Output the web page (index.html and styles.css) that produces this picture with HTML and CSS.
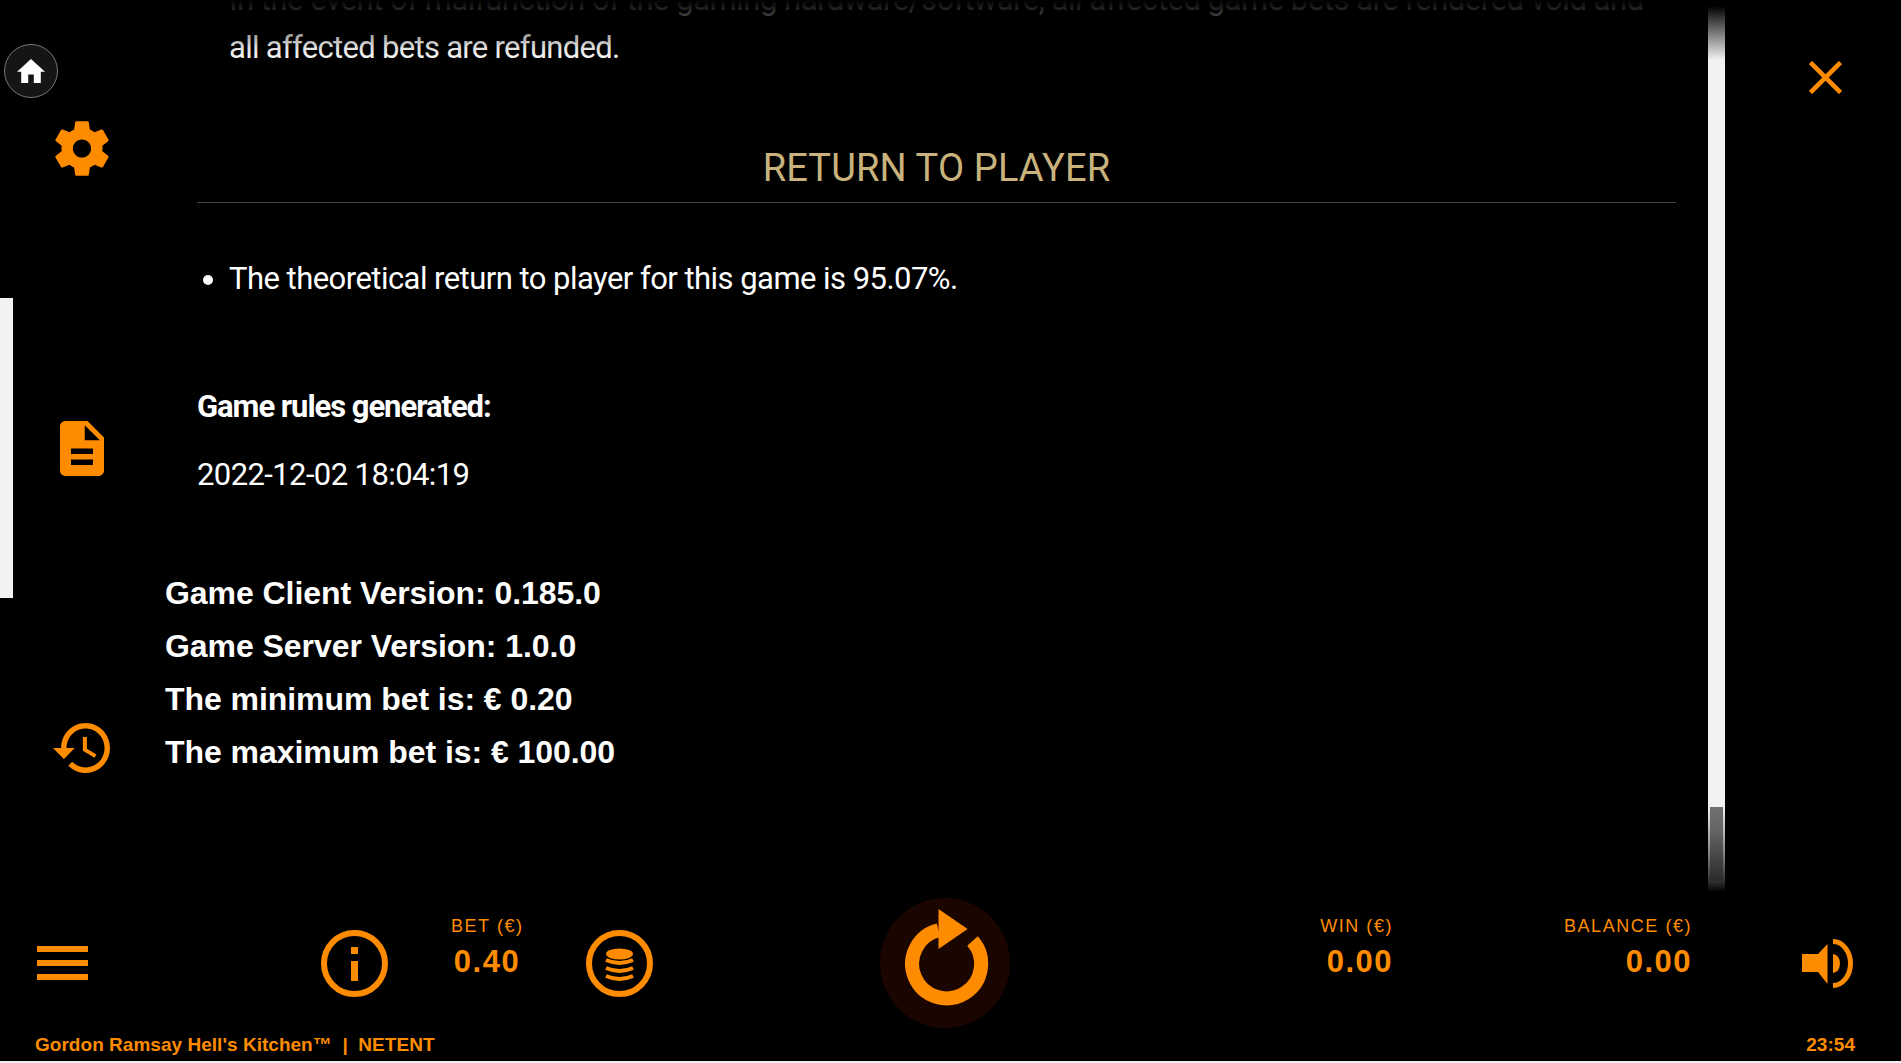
FILE: index.html
```html
<!DOCTYPE html>
<html lang="en">
<head>
  <meta charset="UTF-8" />
  <meta name="viewport" content="width=device-width, initial-scale=1.0"/>
  <title>Gordon Ramsay Hell's Kitchen - Game Rules</title>
  <link rel="stylesheet" href="styles.css">
</head>
<body>

  <div class="main">

    <!-- Left rail -->
    <nav class="rail">
      <div class="rail-mark"></div>
      <button class="home">
        <svg viewBox="2 3 20 17" width="28" height="24"><path fill="#fff" d="M10 20v-6h4v6h5v-8h3L12 3 2 12h3v8z"/></svg>
      </button>
      <svg class="rail-gear" viewBox="2.6 2 18.8 20" width="54" height="57"><path fill="#ff8c00" d="M19.14 12.94c.04-.3.06-.61.06-.94 0-.32-.02-.64-.07-.94l2.03-1.58c.18-.14.23-.41.12-.61l-1.92-3.32c-.12-.22-.37-.29-.59-.22l-2.39.96c-.5-.38-1.03-.7-1.62-.94l-.36-2.54c-.04-.24-.24-.41-.48-.41h-3.84c-.24 0-.43.17-.47.41l-.36 2.54c-.59.24-1.13.57-1.62.94l-2.39-.96c-.22-.08-.47 0-.59.22L2.74 8.87c-.12.21-.08.47.12.61l2.03 1.58c-.05.3-.09.63-.09.94s.02.64.07.94l-2.03 1.58c-.18.14-.23.41-.12.61l1.92 3.32c.12.22.37.29.59.22l2.39-.96c.5.38 1.03.7 1.62.94l.36 2.54c.05.24.24.41.48.41h3.84c.24 0 .44-.17.47-.41l.36-2.54c.59-.24 1.13-.56 1.62-.94l2.39.96c.22.08.47 0 .59-.22l1.92-3.32c.12-.22.07-.47-.12-.61l-2.01-1.58zM12 15.2c-1.76 0-3.2-1.44-3.2-3.2s1.44-3.2 3.2-3.2 3.2 1.44 3.2 3.2-1.44 3.2-3.2 3.2z"/></svg>
      <svg class="rail-doc" viewBox="4 2 16 20" width="44" height="55"><path fill="#ff8c00" d="M14 2H6c-1.1 0-2 .9-2 2v16c0 1.1.9 2 2 2h12c1.1 0 2-.9 2-2V8l-6-6zm2 16H8v-2h8v2zm0-4H8v-2h8v2zm-3-5V3.5L18.5 9H13z"/></svg>
      <svg class="rail-history" viewBox="1 3 21 18" width="57" height="50" preserveAspectRatio="none"><path fill="#ff8c00" d="M13 3c-4.97 0-9 4.03-9 9H1l3.89 3.89.07.14L9 12H6c0-3.87 3.13-7 7-7s7 3.13 7 7-3.13 7-7 7c-1.93 0-3.68-.79-4.94-2.06l-1.42 1.42C8.27 19.99 10.51 21 13 21c4.97 0 9-4.03 9-9s-4.03-9-9-9zm-1 5v5l4.28 2.54.72-1.21-3.5-2.08V8H12z"/></svg>
    </nav>

    <!-- Rules text -->
    <section class="content">
      <div class="fade"></div>
      <div class="rules">
        <p class="rules-text">In the event of malfunction of the gaming hardware/software, all affected game bets are rendered void and</p>
        <p class="rules-text rules-text-end">all affected bets are refunded.</p>
        <h2 class="rules-title">RETURN TO PLAYER</h2>
        <ul class="rules-list">
          <li>The theoretical return to player for this game is 95.07%.</li>
        </ul>
        <p class="generated">Game rules generated:</p>
        <p class="generated-date">2022-12-02 18:04:19</p>
      </div>
      <div class="versions">
        <div>Game Client Version: 0.185.0</div>
        <div>Game Server Version: 1.0.0</div>
        <div>The minimum bet is: € 0.20</div>
        <div>The maximum bet is: € 100.00</div>
      </div>
    </section>

    <div class="track">
      <div class="thumb"></div>
    </div>

    <div class="side">
      <svg viewBox="0 0 33 33" width="33" height="33"><path stroke="#ff8c00" stroke-width="4.5" d="M1.500 1.500l30 30M31.500 1.500l-30 30"/></svg>
    </div>
  </div>

  <!-- Bottom controls -->
  <div class="controls">
    <div class="menu"><span></span><span></span><span></span></div>

    <svg class="ctl-info" viewBox="0 0 67 67" width="67" height="67">
      <circle cx="33.5" cy="33.5" r="30.5" fill="none" stroke="#ff8c00" stroke-width="6"/>
      <rect x="30" y="17" width="7" height="7" fill="#ff8c00"/>
      <rect x="30" y="31" width="7" height="20" fill="#ff8c00"/>
    </svg>

    <div class="stat stat-bet">
      <div class="stat-label">BET (€)</div>
      <div class="stat-value">0.40</div>
    </div>

    <svg class="ctl-coins" viewBox="0 0 67 67" width="67" height="67">
      <circle cx="33.5" cy="33.5" r="30.5" fill="none" stroke="#ff8c00" stroke-width="6"/>
      <ellipse cx="33.5" cy="24" rx="13.5" ry="5.5" fill="#ff8c00"/>
      <path fill="none" stroke="#ff8c00" stroke-width="4" d="M20 30q13.5 6 27 0M20 38q13.5 6 27 0M20 46q13.5 6 27 0"/>
    </svg>

    <button class="spin">
      <svg viewBox="0 0 130 130" width="130" height="130">
        <path fill="none" stroke="#ff8c00" stroke-width="14" d="M92.5 43A34.5 34.5 0 1 1 58.5 32.3"/>
        <path fill="#ff8c00" d="M58.5 11L87.6 31 58.5 51z"/>
      </svg>
    </button>

    <div class="stat stat-win">
      <div class="stat-label">WIN (€)</div>
      <div class="stat-value">0.00</div>
    </div>

    <div class="stat stat-balance">
      <div class="stat-label">BALANCE (€)</div>
      <div class="stat-value">0.00</div>
    </div>

    <svg class="ctl-sound" viewBox="0 0 51 49" width="51" height="49">
      <path fill="#ff8c00" d="M0 15h16L25.5 5v40L16 33H0z"/>
      <path fill="#ff8c00" d="M31 15a7 9.500 0 0 1 0 19z"/>
      <path fill="none" stroke="#ff8c00" stroke-width="5" d="M31 2.500A17.500 22 0 0 1 31 46.500"/>
    </svg>
  </div>

  <footer class="footer">
    <span>Gordon Ramsay Hell's Kitchen™&nbsp; | &nbsp;NETENT</span>
    <span>23:54</span>
  </footer>

</body>
</html>
```

FILE: styles.css
```css
body {
  margin: 0;
  height: 1063px;
  overflow: hidden;
  background: #000;
  color: #fff;
  font-family: Roboto, sans-serif;
  display: flex;
  flex-direction: column;
}
p, h2, ul {
  margin: 0;
  padding: 0;
}
button {
  padding: 0;
  border: none;
  background: none;
}
svg {
  display: block;
  flex: none;
}

.main {
  display: flex;
  height: 898px;
}

/* left rail */
.rail {
  position: relative;
  width: 165px;
  flex: none;
  display: flex;
  flex-direction: column;
  align-items: center;
  padding-right: 1px;
  box-sizing: border-box;
}
.rail-mark {
  position: absolute;
  left: 0;
  top: 298px;
  width: 13px;
  height: 300px;
  background: #f2f2f2;
}
.home {
  align-self: flex-start;
  margin: 44px 0 0 4px;
  width: 54px;
  height: 54px;
  box-sizing: border-box;
  border: 1px solid #777;
  border-radius: 50%;
  background: #151515;
  display: flex;
  align-items: center;
  justify-content: center;
}
.rail-gear {
  margin-top: 22px;
}
.rail-doc {
  margin-top: 244px;
}
.rail-history {
  margin: 247px 2px 0 0;
}

/* rules text */
.content {
  position: relative;
  width: 1543px;
  flex: none;
  overflow: hidden;
}
.fade {
  position: absolute;
  left: 0;
  right: 0;
  top: 0;
  height: 62px;
  background: linear-gradient(to bottom, #000 0, rgba(0, 0, 0, 0.78) 14px, rgba(0, 0, 0, 0.12) 48px, rgba(0, 0, 0, 0) 100%);
}
.rules {
  width: 1479px;
  margin-left: 32px;
  margin-top: -24px;
  font-size: 31px;
  line-height: 48px;
}
.rules-text {
  padding-left: 32px;
  letter-spacing: -0.47px;
}
.rules-text-end {
  letter-spacing: -0.7px;
}
.rules-title {
  margin-top: 72px;
  padding-bottom: 10px;
  border-bottom: 1px solid #444;
  font-size: 38px;
  font-weight: 400;
  line-height: 48px;
  letter-spacing: 0.15px;
  text-align: center;
  color: #c9b27c;
}
.rules-list {
  margin-top: 52px;
  padding-left: 32px;
  letter-spacing: -0.54px;
}
.generated {
  margin-top: 80px;
  font-weight: 700;
  letter-spacing: -1.05px;
}
.generated-date {
  margin-top: 20px;
  letter-spacing: -0.6px;
}
.versions {
  margin-top: 67px;
  padding-top: 1px;
  font-family: "Liberation Sans", sans-serif;
  font-size: 32px;
  font-weight: 700;
  line-height: 53.1px;
  letter-spacing: -0.06px;
}

/* scrollbar */
.track {
  position: relative;
  width: 17px;
  height: 886px;
  margin-top: 6px;
  flex: none;
  background: linear-gradient(to bottom, #000 0, #f2f2f2 54px, #f2f2f2 801px, #888 846px, #333 875px, #000 886px);
}
.thumb {
  position: absolute;
  left: 2px;
  top: 801px;
  width: 13px;
  height: 74px;
  background: linear-gradient(to bottom, #707070 0, #666 30%, #2a2a2a 100%);
}
.side {
  padding: 61px 0 0 84px;
}

/* bottom controls */
.controls {
  display: flex;
  align-items: center;
  height: 130px;
  flex: none;
  color: #ff8c00;
  font-family: "Liberation Sans", sans-serif;
}
.menu {
  display: flex;
  flex-direction: column;
  gap: 8px;
  width: 51px;
  margin-left: 37px;
}
.menu span {
  height: 6px;
  background: #ff8c00;
}
.ctl-info {
  margin-left: 233px;
}
.stat {
  align-self: flex-start;
  padding-top: 18px;
  text-align: right;
}
.stat-label {
  font-size: 18px;
  line-height: 20px;
  letter-spacing: 1.55px;
  white-space: nowrap;
}
.stat-value {
  margin-top: 8px;
  font-size: 31px;
  font-weight: 700;
  line-height: 36px;
  letter-spacing: 1.5px;
}
.stat-bet {
  width: 72px;
  margin-left: 63px;
  text-align: center;
}
.ctl-coins {
  margin-left: 63px;
}
.spin {
  width: 130px;
  height: 130px;
  margin-left: 227px;
  border-radius: 50%;
  background: #1a0500;
}
.stat-win {
  width: 74px;
  margin-left: 309px;
}
.stat-balance {
  width: 128px;
  margin-left: 171px;
}
.ctl-sound {
  margin-left: 110px;
}

.footer {
  flex: 1;
  display: flex;
  justify-content: space-between;
  align-items: center;
  padding: 0 46px 0 35px;
  border-bottom: 2px solid #eee;
  color: #ff8c00;
  font-family: "Liberation Sans", sans-serif;
  font-size: 19px;
  font-weight: 700;
  letter-spacing: 0.03px;
}
```
